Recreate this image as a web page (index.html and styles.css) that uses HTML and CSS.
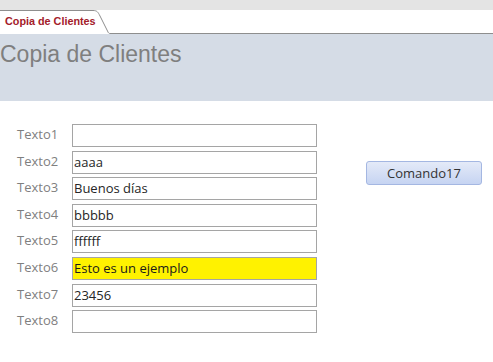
FILE: index.html
```html
<!DOCTYPE html>
<html lang="es">
<head>
  <meta charset="UTF-8" />
  <title>Copia de Clientes</title>
  <link rel="stylesheet" href="styles.css">
</head>
<body>

<div class="topbar"></div>

<div class="tabstrip">
  <div class="tab">
    <svg class="tab-edge" width="110" height="24" viewBox="0 0 110 24">
      <path d="M0 0.5 H93 C97 0.5 98 2 100 6 L108 22 C108.5 23 109 23.5 110 23.5" fill="none" stroke="#8e8e8e" stroke-width="1"/>
    </svg>
    <span>Copia de Clientes</span>
  </div>
  <div class="tab-rest"></div>
</div>

<header>
  <h1>Copia de Clientes</h1>
</header>

<div class="form">
  <div class="fields">
    <label>Texto1</label><div class="box"></div>
    <label>Texto2</label><div class="box">aaaa</div>
    <label>Texto3</label><div class="box">Buenos días</div>
    <label>Texto4</label><div class="box">bbbbb</div>
    <label>Texto5</label><div class="box">ffffff</div>
    <label>Texto6</label><div class="box yellow">Esto es un ejemplo</div>
    <label>Texto7</label><div class="box">23456</div>
    <label>Texto8</label><div class="box"></div>
  </div>
  <button class="cmd">Comando17</button>
</div>

</body>
</html>
```

FILE: styles.css
```css
body { margin: 0; font-family: "Open Sans", "Liberation Sans", sans-serif; background: #fff; }
.topbar { height: 10px; background: #e4e4e4; }
.tabstrip { display: flex; height: 24px; background: #fff; }
.tab { position: relative; width: 110px; flex: none; }
.tab-edge { position: absolute; left: 0; top: 0; }
.tab span { display: block; padding: 5px 0 0 5px; font-family: "Liberation Sans", sans-serif; font-weight: bold; font-size: 10.8px; color: #a3202a; }
.tab-rest { flex: 1; border-bottom: 1px solid #8e8e8e; }
header { height: 67px; background: #d5dce6; }
h1 { margin: 0; padding: 7px 0 0 0; font-family: "Liberation Sans", sans-serif; font-weight: normal; font-size: 23px; color: #7f7f7f; }
.form { display: flex; align-items: flex-start; padding: 23px 0 0 0; }
.fields { display: grid; grid-template-columns: 72px 245px; grid-auto-rows: 23px; row-gap: 3.6px; }
.fields label { padding: 0 0 0 17px; font-size: 13px; line-height: 20px; color: #7f7f7f; }
.box { box-sizing: border-box; border: 1px solid #a5a5a5; padding: 0 0 0 1px; font-size: 13px; line-height: 21px; color: #262626; background: #fff; }
.box.yellow { background: #fff200; color: #1a1a1a; }
.cmd { margin: 37px 0 0 49px; width: 116px; height: 24px; border: 1px solid #a4b7e2; border-radius: 3px; background: linear-gradient(#e4eaf8, #c6d4f2); font-family: "Open Sans", "Liberation Sans", sans-serif; font-size: 13px; color: #333; padding: 0; }
```
